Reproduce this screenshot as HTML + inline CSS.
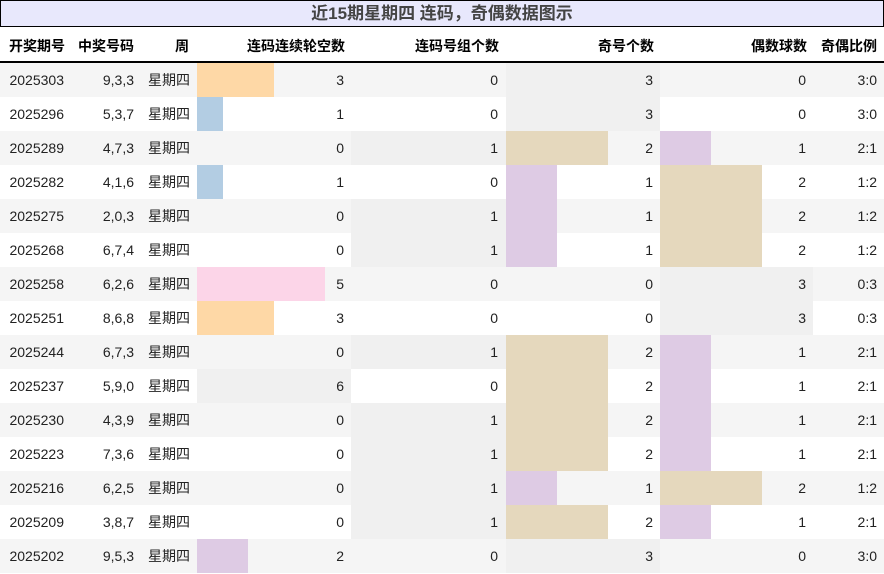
<!DOCTYPE html><html><head><meta charset="utf-8"><style>
body{margin:0;width:884px;height:574px;background:#fff;font-family:"Liberation Sans","Noto Sans CJK SC",sans-serif;position:relative;overflow:hidden}
.t{position:absolute;left:0;top:0;width:882px;height:25px;background:#e8e8fc;border:1px solid #000;text-align:center;font-weight:bold;font-size:17px;line-height:26px;color:#444}
.h{position:absolute;top:27px;height:35px;line-height:38px;font-weight:bold;font-size:14px;text-align:right;color:#000}
.hl{position:absolute;left:0;top:61px;width:884px;height:2px;background:#000}
.r{position:absolute;left:0;width:884px;height:34px}
.c{position:absolute;top:0;height:34px;line-height:34px;font-size:14px;text-align:right;color:#222}
.b{position:absolute;top:0;height:34px}
</style></head><body>
<div class="t">近15期星期四 连码，奇偶数据图示</div>
<div class="h" style="left:0;width:65px">开奖期号</div>
<div class="h" style="left:73px;width:61px">中奖号码</div>
<div class="h" style="left:140px;width:49px">周</div>
<div class="h" style="left:197px;width:148px">连码连续轮空数</div>
<div class="h" style="left:351px;width:148px">连码号组个数</div>
<div class="h" style="left:506px;width:148px">奇号个数</div>
<div class="h" style="left:660px;width:147px">偶数球数</div>
<div class="h" style="left:813px;width:64px">奇偶比例</div>
<div class="hl"></div>
<div id="rows"></div>
<script>
var d=[["2025303","9,3,3",3,0,3,0],["2025296","5,3,7",1,0,3,0],["2025289","4,7,3",0,1,2,1],["2025282","4,1,6",1,0,1,2],["2025275","2,0,3",0,1,1,2],["2025268","6,7,4",0,1,1,2],["2025258","6,2,6",5,0,0,3],["2025251","8,6,8",3,0,0,3],["2025244","6,7,3",0,1,2,1],["2025237","5,9,0",6,0,2,1],["2025230","4,3,9",0,1,2,1],["2025223","7,3,6",0,1,2,1],["2025216","6,2,5",0,1,1,2],["2025209","3,8,7",0,1,2,1],["2025202","9,5,3",2,0,3,0]];
var c4={1:"#b3cde3",2:"#decbe4",3:"#fed8a6",5:"#fcd5e8"};
var cv={1:"#decbe4",2:"#e5d8bd"};
var h="";
d.forEach(function(r,i){
var y=63+i*34,bg=i%2==0?"#f5f5f5":"#fff";
h+='<div class="r" style="top:'+y+'px;background:'+bg+'">';
if(r[2]==6)h+='<div class="b" style="left:197px;width:154px;background:#f0f0f0"></div>';
if(r[3]==1)h+='<div class="b" style="left:351px;width:155px;background:#f0f0f0"></div>';
if(r[4]==3)h+='<div class="b" style="left:506px;width:154px;background:#f0f0f0"></div>';
if(r[5]==3)h+='<div class="b" style="left:660px;width:153px;background:#f0f0f0"></div>';
if(c4[r[2]])h+='<div class="b" style="left:197px;width:'+Math.round(r[2]*25.6)+'px;background:'+c4[r[2]]+'"></div>';
if(cv[r[4]])h+='<div class="b" style="left:506px;width:'+(r[4]*51)+'px;background:'+cv[r[4]]+'"></div>';
if(cv[r[5]])h+='<div class="b" style="left:660px;width:'+(r[5]*51)+'px;background:'+cv[r[5]]+'"></div>';
h+='<div class="c" style="left:0;width:64px">'+r[0]+'</div>';
h+='<div class="c" style="left:73px;width:61px">'+r[1]+'</div>';
h+='<div class="c" style="left:140px;width:50px">星期四</div>';
h+='<div class="c" style="left:197px;width:147px">'+r[2]+'</div>';
h+='<div class="c" style="left:351px;width:147px">'+r[3]+'</div>';
h+='<div class="c" style="left:506px;width:147px">'+r[4]+'</div>';
h+='<div class="c" style="left:660px;width:146px">'+r[5]+'</div>';
h+='<div class="c" style="left:813px;width:64px">'+r[4]+':'+r[5]+'</div>';
h+='</div>';});
document.getElementById("rows").innerHTML=h;
</script>
</body></html>
